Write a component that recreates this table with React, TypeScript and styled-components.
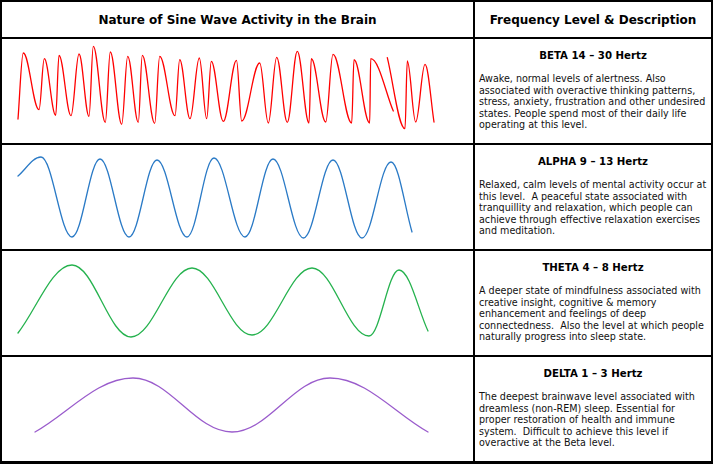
import React from "react";
import styled, { createGlobalStyle } from "styled-components";

const Global = createGlobalStyle`
  html, body { margin: 0; padding: 0; background: #ffffff; }
  body { font-family: "DejaVu Sans", Verdana, sans-serif; }
`;

const Table = styled.div`
  width: 713px;
  box-sizing: border-box;
  background: #000;
  padding: 2px 2px 3px 2px;
  display: grid;
  grid-template-columns: 471px 236px;
  grid-template-rows: 35px repeat(4, 104px);
  gap: 2px;
`;

const HeadCell = styled.div`
  background: #fff;
  display: flex;
  align-items: center;
  justify-content: center;
  font-family: "DejaVu Sans", Verdana, sans-serif;
  font-weight: bold;
  font-size: 12px;
  color: #000;
  padding-top: 1px;
  box-sizing: border-box;
`;

const WaveCell = styled.div`
  background: #fff;
  overflow: hidden;
`;

const DescCell = styled.div`
  background: #fff;
  padding: 11px 4px 0 4px;
  box-sizing: border-box;
  display: flex;
  flex-direction: column;
  color: #000;
`;

const Title = styled.div`
  font-family: "DejaVu Sans", Verdana, sans-serif;
  font-weight: bold;
  font-size: 10.2px;
  text-align: center;
  line-height: 12px;
  margin-bottom: 11px;
  white-space: nowrap;
`;

const Desc = styled.div`
  font-family: "DejaVu Sans Condensed", "DejaVu Sans", sans-serif;
  font-size: 10.65px;
  line-height: 11.5px;
  color: #111;
`;

const Line = styled.div`
  white-space: pre;
`;

type Pt = [number, number];

function wavePath(segs: Pt[][], ox: number, oy: number): string {
  let d = "";
  for (const seg of segs) {
    const p = seg.map(([x, y]) => [x - ox, y - oy] as Pt);
    d += `M${p[0][0].toFixed(2)} ${p[0][1].toFixed(2)} `;
    for (let i = 1; i < p.length; i++) {
      const [x0, y0] = p[i - 1];
      const [x1, y1] = p[i];
      const dx = x1 - x0;
      const k = 0.37;
      let c1: Pt = [x0 + dx * k, y0];
      let c2: Pt = [x1 - dx * k, y1];
      if (i === 1) c1 = [x0 + (x1 - x0) / 3, y0 + (y1 - y0) / 3];
      if (i === p.length - 1) c2 = [x1 - (x1 - x0) / 3, y1 - (y1 - y0) / 3];
      d += `C${c1[0].toFixed(2)} ${c1[1].toFixed(2)} ${c2[0].toFixed(2)} ${c2[1].toFixed(2)} ${x1.toFixed(2)} ${y1.toFixed(2)} `;
    }
  }
  return d;
}

const red: Pt[][] = [
  [
    [18, 119], [23.3, 53], [39, 109.7], [44.3, 58.7], [55.7, 115.3], [59, 55.3],
    [71, 115.7], [79, 54], [89, 116.3], [93.3, 46.3], [105.3, 122.3], [110.3, 52],
    [121.7, 124.3], [127.7, 56.3], [138.3, 122.3], [142.3, 55.3], [154.7, 123.3],
    [159.7, 56.3], [175, 115.7], [179.7, 59.7], [190, 118.7], [199.3, 58],
    [206.7, 118.7], [211.3, 61.3], [223.3, 121.3], [236.5, 60.3], [241.7, 121],
    [259.7, 63], [268.3, 123], [276.7, 57.3], [287.3, 122.3], [297.3, 51.3],
    [309, 123], [311.3, 58.7], [325.7, 122], [333, 54.3], [351.7, 123],
    [354, 59.7], [369.7, 123], [370.7, 58.7], [393.3, 111],
  ],
  [
    [387.3, 57.7], [405, 128.7], [407.3, 61], [415.7, 122], [425, 64.3], [434, 122],
  ],
];

function regular(start: Pt, extremes: number[], peakY: number[], troughY: number[], firstIsPeak: boolean, end: Pt): Pt[][] {
  const pts: Pt[] = [start];
  let pi = 0;
  let ti = 0;
  extremes.forEach((x, i) => {
    const isPeak = firstIsPeak ? i % 2 === 0 : i % 2 === 1;
    pts.push([x, isPeak ? peakY[pi++ % peakY.length] : troughY[ti++ % troughY.length]]);
  });
  pts.push(end);
  return [pts];
}

const blue = regular(
  [18, 176],
  [41, 72, 100, 129, 157, 187, 214, 245, 273, 303.5, 333, 362, 391],
  [157, 159, 160, 158, 159, 160, 162],
  [237, 237, 237, 237, 238, 238],
  true,
  [412, 232]
);

const green = regular(
  [18, 333],
  [72, 131, 192, 252, 312, 369, 399],
  [265, 268, 268, 270],
  [337, 335, 336],
  true,
  [428, 331]
);

const purple: Pt[][] = [
  [[35, 432], [133, 378], [232, 432], [330, 378], [428, 432]],
];

type WaveProps = { segs: Pt[][]; color: string; top: number };

const WaveSvg = styled.svg`
  display: block;
`;

const Wave: React.FC<WaveProps> = ({ segs, color, top }) => (
  <WaveSvg width={471} height={104} viewBox="0 0 471 104">
    <path
      d={wavePath(segs, 2, top)}
      fill="none"
      stroke={color}
      strokeWidth={1.3}
      strokeLinejoin="round"
      strokeLinecap="round"
    />
  </WaveSvg>
);

type Row = { title: string; lines: string[]; segs: Pt[][]; color: string; top: number };

const rows: Row[] = [
  {
    title: "BETA 14 \u2013 30 Hertz",
    lines: [
      "Awake, normal levels of alertness. Also",
      "associated with overactive thinking patterns,",
      "stress, anxiety, frustration and other undesired",
      "states. People spend most of their daily life",
      "operating at this level.",
    ],
    segs: red,
    color: "#ff0000",
    top: 39,
  },
  {
    title: "ALPHA 9 \u2013 13 Hertz",
    lines: [
      "Relaxed, calm levels of mental activity occur at",
      "this level.  A peaceful state associated with",
      "tranquillity and relaxation, which people can",
      "achieve through effective relaxation exercises",
      "and meditation.",
    ],
    segs: blue,
    color: "#2a7ac6",
    top: 145,
  },
  {
    title: "THETA 4 \u2013 8 Hertz",
    lines: [
      "A deeper state of mindfulness associated with",
      "creative insight, cognitive & memory",
      "enhancement and feelings of deep",
      "connectedness.  Also the level at which people",
      "naturally progress into sleep state.",
    ],
    segs: green,
    color: "#25b24e",
    top: 251,
  },
  {
    title: "DELTA 1 \u2013 3 Hertz",
    lines: [
      "The deepest brainwave level associated with",
      "dreamless (non-REM) sleep. Essential for",
      "proper restoration of health and immune",
      "system.  Difficult to achieve this level if",
      "overactive at the Beta level.",
    ],
    segs: purple,
    color: "#9a5ccc",
    top: 357,
  },
];

export default function App() {
  return (
    <>
      <Global />
      <Table>
        <HeadCell>Nature of Sine Wave Activity in the Brain</HeadCell>
        <HeadCell>Frequency Level &amp; Description</HeadCell>
        {rows.map((r) => (
          <React.Fragment key={r.title}>
            <WaveCell>
              <Wave segs={r.segs} color={r.color} top={r.top} />
            </WaveCell>
            <DescCell>
              <Title>{r.title}</Title>
              <Desc>
                {r.lines.map((l, i) => (
                  <Line key={i}>{l}</Line>
                ))}
              </Desc>
            </DescCell>
          </React.Fragment>
        ))}
      </Table>
    </>
  );
}
